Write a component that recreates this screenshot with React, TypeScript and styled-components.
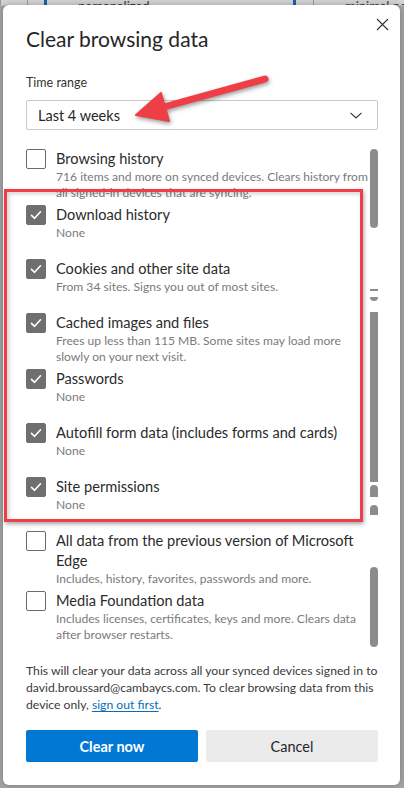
import React from "react";
import styled, { createGlobalStyle } from "styled-components";

const Global = createGlobalStyle`
  html, body { margin: 0; padding: 0; background: #a4a4a4; }
  * { box-sizing: border-box; }
`;

const FONT = `Lato, "Noto Sans", "Liberation Sans", sans-serif`;

const Screen = styled.div`
  position: relative;
  width: 404px;
  height: 788px;
  overflow: hidden;
  display: grid;
  grid-template-columns: minmax(0, 1fr);
  grid-template-rows: minmax(0, 1fr);
  background: #a4a4a4;
  font-family: ${FONT};
`;

const Backdrop = styled.div`
  grid-area: 1 / 1;
  display: flex;
  flex-direction: column;
  min-width: 0;
`;

const BackdropTop = styled.div`
  height: 6px;
  background: #d3d3d3;
  display: flex;
  align-items: flex-end;
  overflow: hidden;
  border-bottom: 1px solid #b9b9b9;
`;

const BackdropCell = styled.div<{ $w: number; $accent?: boolean }>`
  width: ${(p) => p.$w}px;
  height: 100%;
  flex: none;
  border-left: ${(p) => (p.$accent ? "3px solid #1f5fae" : "1px solid #9a9a9a")};
  display: flex;
  align-items: flex-end;
  overflow: hidden;
`;

const BackdropText = styled.span<{ $pad: number }>`
  font-size: 13px;
  line-height: 13px;
  color: #333;
  padding-left: ${(p) => p.$pad}px;
  transform: translateY(8px);
  white-space: nowrap;
`;

const Dialog = styled.div`
  grid-area: 1 / 1;
  min-width: 0;
  margin: 5px 4px 3px 3px;
  background: #ffffff;
  border-radius: 6px;
  box-shadow: 0 0 6px rgba(0, 0, 0, 0.25);
  padding: 0 22px 23px 23px;
  display: flex;
  flex-direction: column;
  white-space: nowrap;
`;

const Header = styled.div`
  display: flex;
  align-items: flex-start;
  justify-content: space-between;
  padding-top: 20px;
`;

const Title = styled.h1`
  margin: 0;
  font-size: 21px;
  line-height: 28px;
  font-weight: 400;
  color: #262626;
`;

const CloseButton = styled.button`
  margin: -9px -12px 0 0;
  width: 16px;
  height: 16px;
  padding: 0;
  border: 0;
  background: transparent;
  display: flex;
  align-items: center;
  justify-content: center;
  color: #333;
`;

const FieldLabel = styled.div`
  margin-top: 22px;
  font-size: 12.5px;
  line-height: 16px;
  color: #333;
`;

const Select = styled.div`
  margin-top: 9px;
  height: 32px;
  border: 1px solid #c8c8c8;
  border-radius: 2px;
  display: flex;
  align-items: center;
  justify-content: space-between;
  padding: 0 15px 0 11px;
  font-size: 14.5px;
  color: #262626;
`;

const ScrollArea = styled.div`
  margin-top: 10px;
  display: flex;
  gap: 4px;
`;

const List = styled.div`
  flex: 1;
  min-width: 0;
  padding-top: 9px;
  display: flex;
  flex-direction: column;
`;

const Item = styled.div`
  display: flex;
  gap: 10px;
  min-height: 54px;
  padding-bottom: 4px;
`;

const Box = styled.div<{ $checked: boolean }>`
  width: 20px;
  height: 20px;
  flex: none;
  border-radius: 2px;
  background: ${(p) => (p.$checked ? "#6f6f6f" : "#ffffff")};
  border: 1px solid ${(p) => (p.$checked ? "#6f6f6f" : "#6b6b6b")};
  display: flex;
  align-items: center;
  justify-content: center;
`;

const ItemText = styled.div`
  display: flex;
  flex-direction: column;
`;

const ItemTitle = styled.div`
  font-size: 14.6px;
  line-height: 20px;
  color: #2b2b2b;
`;

const ItemDesc = styled.div`
  font-size: 12.1px;
  line-height: 16px;
  color: #7a7a7a;
`;

const Track = styled.div`
  width: 8px;
  flex: none;
  display: flex;
  flex-direction: column;
`;

const Thumb = styled.div<{ $radius: string }>`
  background: #8c8c8c;
  border-radius: ${(p) => p.$radius};
  flex: none;
`;

const Notice = styled.p`
  margin: 15px 0 0;
  font-size: 12.2px;
  line-height: 17px;
  color: #3a3a3a;
`;

const Link = styled.a`
  color: #0a6cbd;
  text-decoration: underline;
  text-underline-offset: 2px;
`;

const Buttons = styled.div`
  margin-top: 17px;
  display: grid;
  grid-template-columns: 1fr 1fr;
  gap: 8px;
`;

const Button = styled.button<{ $primary?: boolean }>`
  height: 32px;
  border: 0;
  border-radius: 2px;
  font-family: ${FONT};
  font-size: 14.5px;
  font-weight: ${(p) => (p.$primary ? 700 : 400)};
  background: ${(p) => (p.$primary ? "#0078d4" : "#ebebeb")};
  color: ${(p) => (p.$primary ? "#ffffff" : "#262626")};
`;

const Highlight = styled.div`
  position: absolute;
  left: 4px;
  top: 189px;
  width: 359px;
  height: 333px;
  border: 3px solid #ef3e48;
  box-shadow: 1px 2px 4px rgba(0, 0, 0, 0.35), inset 2px 2px 4px rgba(0, 0, 0, 0.18);
  pointer-events: none;
`;

const ArrowSvg = styled.svg`
  position: absolute;
  left: 0;
  top: 0;
  pointer-events: none;
  filter: drop-shadow(1px 2px 2px rgba(0, 0, 0, 0.4));
`;

type Row = { label: string[]; desc: string[]; checked: boolean };

const rows: Row[] = [
  { label: ["Browsing history"], desc: ["716 items and more on synced devices. Clears history from", "all signed-in devices that are syncing."], checked: false },
  { label: ["Download history"], desc: ["None"], checked: true },
  { label: ["Cookies and other site data"], desc: ["From 34 sites. Signs you out of most sites."], checked: true },
  { label: ["Cached images and files"], desc: ["Frees up less than 115 MB. Some sites may load more", "slowly on your next visit."], checked: true },
  { label: ["Passwords"], desc: ["None"], checked: true },
  { label: ["Autofill form data (includes forms and cards)"], desc: ["None"], checked: true },
  { label: ["Site permissions"], desc: ["None"], checked: true },
  { label: ["All data from the previous version of Microsoft", "Edge"], desc: ["Includes, history, favorites, passwords and more."], checked: false },
  { label: ["Media Foundation data"], desc: ["Includes licenses, certificates, keys and more. Clears data", "after browser restarts."], checked: false },
];

const thumbs = [
  { mt: 9, h: 79, r: "4px" },
  { mt: 61, h: 2, r: "0" },
  { mt: 6, h: 4, r: "0 0 4px 4px" },
  { mt: 11, h: 170, r: "0" },
  { mt: 3, h: 12, r: "4px 4px 0 0" },
  { mt: 8, h: 10, r: "4px 4px 0 0" },
  { mt: 52, h: 80, r: "4px" },
];

const Check = () => (
  <svg width="14" height="14" viewBox="0 0 14 14">
    <path d="M2.5 7.4 L5.6 10.3 L11.5 3.8" fill="none" stroke="#fff" strokeWidth="1.6" strokeLinecap="round" strokeLinejoin="round" />
  </svg>
);

const Lines = ({ lines }: { lines: string[] }) => (
  <>
    {lines.map((l, i) => (
      <React.Fragment key={i}>
        {i > 0 && <br />}
        {l}
      </React.Fragment>
    ))}
  </>
);

export default function App() {
  return (
    <>
      <Global />
      <Screen>
        <Backdrop>
          <BackdropTop>
            <BackdropCell $w={27} />
            <BackdropCell $w={17} />
            <BackdropCell $w={249} $accent>
              <BackdropText $pad={31}>personalized</BackdropText>
            </BackdropCell>
            <BackdropCell $w={20} $accent />
            <BackdropCell $w={91}>
              <BackdropText $pad={31}>minimal ne</BackdropText>
            </BackdropCell>
          </BackdropTop>
        </Backdrop>
        <Dialog>
          <Header>
            <Title>Clear browsing data</Title>
            <CloseButton aria-label="Close">
              <svg width="13" height="13" viewBox="0 0 13 13">
                <path d="M1 1 L12 12 M12 1 L1 12" stroke="#333" strokeWidth="1.1" fill="none" />
              </svg>
            </CloseButton>
          </Header>
          <FieldLabel>Time range</FieldLabel>
          <Select>
            <span>Last 4 weeks</span>
            <svg width="12" height="7" viewBox="0 0 12 7">
              <path d="M0.5 0.8 L6 6 L11.5 0.8" fill="none" stroke="#333" strokeWidth="1.1" />
            </svg>
          </Select>
          <ScrollArea>
            <List>
              {rows.map((r, i) => (
                <Item key={i}>
                  <Box $checked={r.checked}>{r.checked && <Check />}</Box>
                  <ItemText>
                    <ItemTitle>
                      <Lines lines={r.label} />
                    </ItemTitle>
                    <ItemDesc>
                      <Lines lines={r.desc} />
                    </ItemDesc>
                  </ItemText>
                </Item>
              ))}
            </List>
            <Track>
              {thumbs.map((t, i) => (
                <Thumb key={i} $radius={t.r} style={{ marginTop: t.mt, height: t.h }} />
              ))}
            </Track>
          </ScrollArea>
          <Notice>
            This will clear your data across all your synced devices signed in to
            <br />
            david.broussard@cambaycs.com. To clear browsing data from this
            <br />
            device only, <Link>sign out first</Link>.
          </Notice>
          <Buttons>
            <Button $primary>Clear now</Button>
            <Button>Cancel</Button>
          </Buttons>
        </Dialog>
        <Highlight />
        <ArrowSvg width="404" height="788" viewBox="0 0 404 788">
          <line x1="265" y1="79" x2="160" y2="108" stroke="#ee3f47" strokeWidth="7" strokeLinecap="round" />
          <polygon points="136,115 161,93 169,121" fill="#ee3f47" stroke="#ee3f47" strokeWidth="2" strokeLinejoin="round" />
        </ArrowSvg>
      </Screen>
    </>
  );
}
